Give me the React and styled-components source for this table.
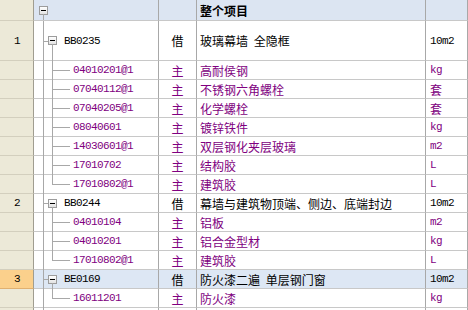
import React from "react";
import styled, { createGlobalStyle } from "styled-components";

const Global = createGlobalStyle`
  html, body { margin: 0; padding: 0; overflow: hidden; background: #fff; }
  * { box-sizing: border-box; }
`;

const LINE = "#a8a8a8";
const PURPLE = "#800080";
const CJK = `"Noto Sans CJK SC", "Noto Sans", sans-serif`;
const MONO = `"Liberation Mono", "DejaVu Sans Mono", monospace`;

const Table = styled.div`
  width: 468px;
  height: 310px;
  overflow: hidden;
  display: flex;
  flex-direction: column;
  font-family: ${CJK};
  font-size: 12px;
  color: #000;
`;

const Row = styled.div`
  display: grid;
  grid-template-columns: 34px 125px 38px 229px 42px;
  height: ${(p) => p.$h}px;
  flex: none;
`;

const NumCell = styled.div`
  display: flex;
  align-items: center;
  justify-content: center;
  background: ${(p) => (p.$sel ? "#fbd08c" : "#ece9d8")};
  border-right: 1px solid #a09d90;
  border-bottom: 1px solid ${(p) => (p.$sel ? "#e0b070" : "#d3cfbe")};
  font-family: ${MONO};
  font-size: 11px;
  letter-spacing: -0.6px;
  padding-left: 1px;
`;

const Cell = styled.div`
  display: flex;
  align-items: center;
  min-width: 0;
  white-space: pre;
  word-spacing: 3px;
  background: ${(p) => (p.$head ? "#dce5f2" : p.$sel ? "#dde7f4" : "#fff")};
  border-right: 1px solid ${LINE};
  border-bottom: 1px solid #c8c8c8;
  color: ${(p) => (p.$child ? PURPLE : "#000")};
  font-weight: ${(p) => (p.$bold ? 700 : 400)};
  justify-content: ${(p) => (p.$center ? "center" : "flex-start")};
  padding-left: ${(p) => (p.$center ? 0 : 3)}px;
`;

const TreeCell = styled(Cell)`
  position: relative;
  align-items: stretch;
  padding-left: ${(p) => p.$pad || 0}px;
`;

const Indent = styled.span`
  position: relative;
  flex: none;
  width: ${(p) => p.$w}px;
  &::before {
    content: "";
    display: ${(p) => (p.$v ? "block" : "none")};
    position: absolute;
    left: ${(p) => p.$x}px;
    top: 0;
    bottom: ${(p) => (p.$half ? "50%" : "-1px")};
    border-left: 1px solid ${LINE};
  }
  &::after {
    content: "";
    display: ${(p) => (p.$h ? "block" : "none")};
    position: absolute;
    left: ${(p) => p.$x}px;
    right: 0;
    top: 50%;
    border-top: 1px solid ${LINE};
  }
`;

const Toggle = styled.span`
  position: relative;
  flex: none;
  align-self: center;
  width: 9px;
  height: 9px;
  border: 1px solid #9c9c9c;
  background: linear-gradient(#ffffff, #e2e2e2);
  &::before {
    content: "";
    position: absolute;
    left: 1px;
    top: 3px;
    width: 5px;
    height: 1px;
    background: #000;
  }
  &::after {
    content: "";
    position: absolute;
    left: 3px;
    top: 100%;
    height: ${(p) => p.$tail}px;
    border-left: 1px solid ${LINE};
  }
`;

const Code = styled.span`
  align-self: center;
  font-family: ${MONO};
  font-size: 11px;
  letter-spacing: -0.6px;
  word-spacing: 0;
  margin-left: ${(p) => p.$gap}px;
  color: ${(p) => (p.$child ? PURPLE : "#000")};
`;

const Unit = styled(Cell)`
  font-family: ${MONO}, ${CJK};
  font-size: 11px;
  letter-spacing: -0.6px;
  padding-left: 4px;
`;

const UnitCJK = styled.span`
  font-family: ${CJK};
  font-size: 12px;
  letter-spacing: 0;
`;

const groups = [
  {
    num: "1",
    code: "BB0235",
    name: "玻璃幕墙 全隐框",
    unit: "10m2",
    tall: true,
    kids: [
      ["04010201@1", "高耐侯钢", "kg"],
      ["07040112@1", "不锈钢六角螺栓", "套"],
      ["07040205@1", "化学螺栓", "套"],
      ["08040601", "镀锌铁件", "kg"],
      ["14030601@1", "双层钢化夹层玻璃", "m2"],
      ["17010702", "结构胶", "L"],
      ["17010802@1", "建筑胶", "L"],
    ],
  },
  {
    num: "2",
    code: "BB0244",
    name: "幕墙与建筑物顶端、侧边、底端封边",
    unit: "10m2",
    kids: [
      ["04010104", "铝板", "m2"],
      ["04010201", "铝合金型材", "kg"],
      ["17010802@1", "建筑胶", "L"],
    ],
  },
  {
    num: "3",
    code: "BE0169",
    name: "防火漆二遍 单层钢门窗",
    unit: "10m2",
    sel: true,
    kids: [["16011201", "防火漆", "kg"]],
  },
];

const renderUnit = (u) =>
  /[\u4e00-\u9fff]/.test(u) ? <UnitCJK>{u}</UnitCJK> : u;

export default function App() {
  return (
    <>
      <Global />
      <Table>
        <Row $h={21}>
          <NumCell />
          <TreeCell $head $pad={5}>
            <Toggle $tail={6} />
          </TreeCell>
          <Cell $head />
          <Cell $head $bold>整个项目</Cell>
          <Cell $head />
        </Row>
        {groups.map((g) => (
          <React.Fragment key={g.num}>
            <Row $h={g.tall ? 40 : 19}>
              <NumCell $sel={g.sel}>{g.num}</NumCell>
              <TreeCell $sel={g.sel}>
                <Indent $w={14} $x={9} $v $h />
                <Toggle $tail={g.tall ? 17 : 7} />
                <Code $gap={7}>{g.code}</Code>
              </TreeCell>
              <Cell $sel={g.sel} $center>借</Cell>
              <Cell $sel={g.sel}>{g.name}</Cell>
              <Unit $sel={g.sel}>{g.unit}</Unit>
            </Row>
            {g.kids.map(([code, name, unit], i) => (
              <Row $h={19} key={g.num + code + i}>
                <NumCell />
                <TreeCell>
                  <Indent $w={18} $x={9} $v />
                  <Indent
                    $w={18}
                    $x={0}
                    $v
                    $h
                    $half={i === g.kids.length - 1}
                  />
                  <Code $gap={3} $child>
                    {code}
                  </Code>
                </TreeCell>
                <Cell $center $child>主</Cell>
                <Cell $child>{name}</Cell>
                <Unit $child>{renderUnit(unit)}</Unit>
              </Row>
            ))}
          </React.Fragment>
        ))}
        <Row $h={19}>
          <NumCell />
          <TreeCell>
            <Indent $w={14} $x={9} $v />
          </TreeCell>
          <Cell />
          <Cell />
          <Cell />
        </Row>
      </Table>
    </>
  );
}
